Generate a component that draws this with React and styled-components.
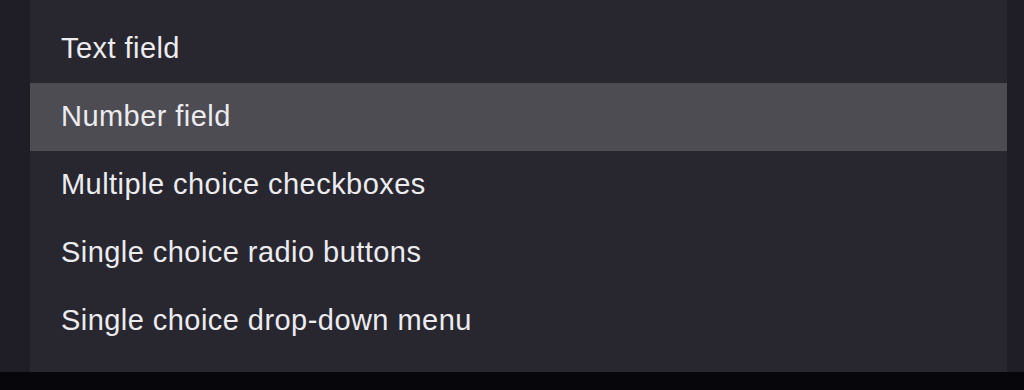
import React from "react";
import styled, { createGlobalStyle } from "styled-components";

const Global = createGlobalStyle`
  html, body {
    margin: 0;
    padding: 0;
    background: #07070b;
  }
`;

const Page = styled.div`
  width: 1024px;
  height: 390px;
  display: flex;
  flex-direction: column;
  background: #07070b;
`;

const Backdrop = styled.div`
  height: 372px;
  background: #1f1e26;
  padding: 0 17px 0 30px;
  box-sizing: border-box;
  display: flex;
`;

const Menu = styled.ul`
  list-style: none;
  margin: 0;
  padding: 15px 0 17px;
  flex: 1;
  background: #28272f;
  font-family: "Liberation Sans", Arial, sans-serif;
`;

const Item = styled.li`
  height: 68px;
  box-sizing: border-box;
  padding: 0 0 2px 31px;
  display: flex;
  align-items: center;
  font-size: 29px;
  letter-spacing: 0.45px;
  color: #ececef;
  background: ${({ active }) => (active ? "#4d4c53" : "transparent")};
`;

const options = [
  "Text field",
  "Number field",
  "Multiple choice checkboxes",
  "Single choice radio buttons",
  "Single choice drop-down menu",
];

export default function App() {
  return (
    <Page>
      <Global />
      <Backdrop>
        <Menu>
          {options.map((label, i) => (
            <Item key={label} active={i === 1}>
              {label}
            </Item>
          ))}
        </Menu>
      </Backdrop>
    </Page>
  );
}
